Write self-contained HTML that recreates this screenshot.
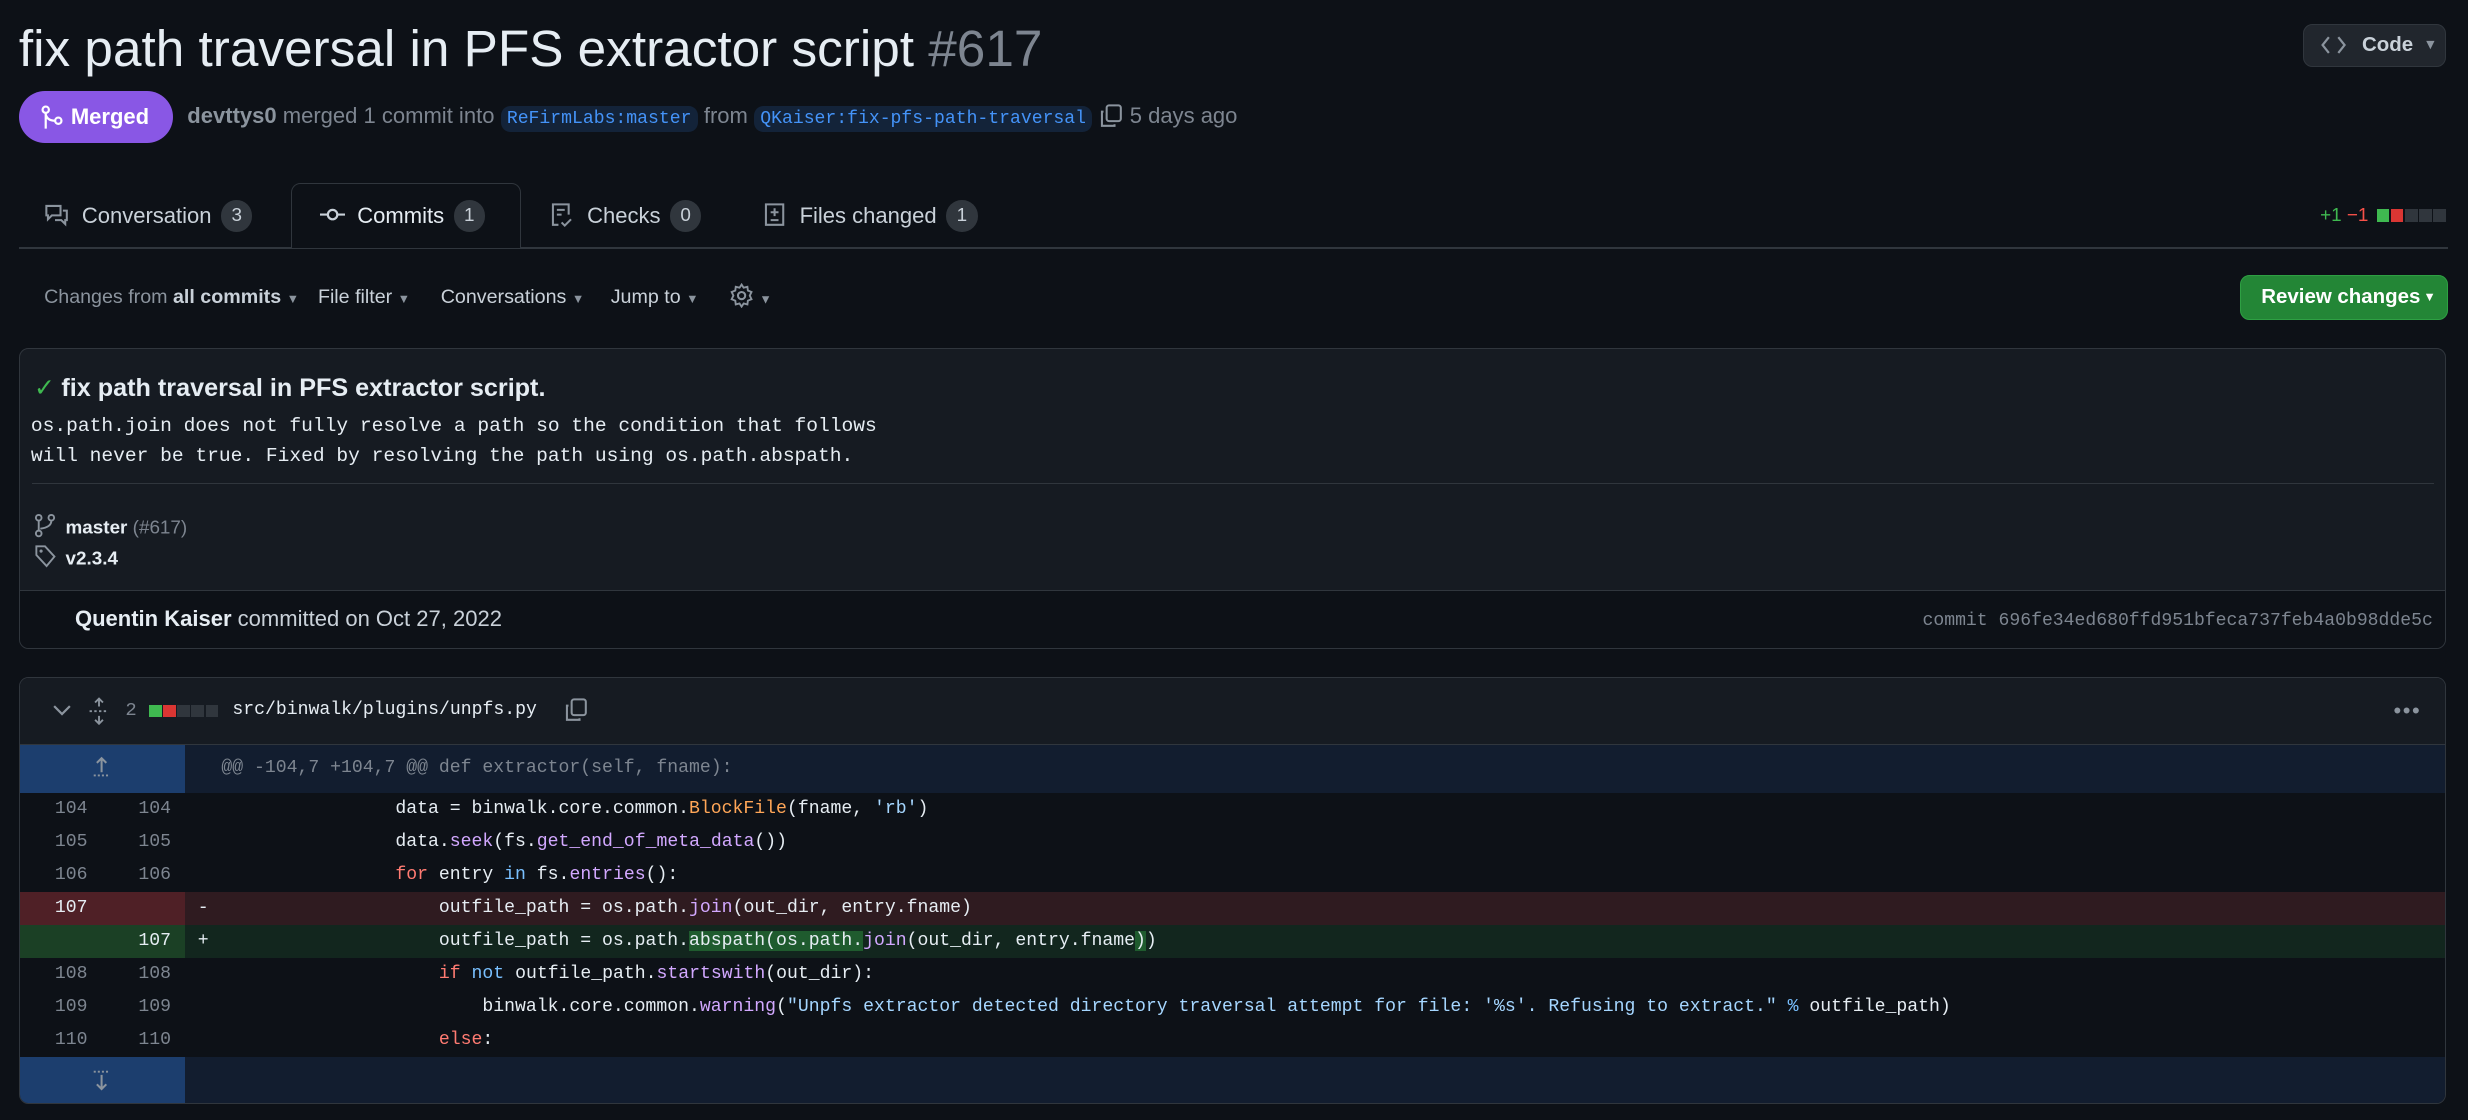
<!DOCTYPE html>
<html><head><meta charset="utf-8">
<style>
html,body{margin:0;padding:0;background:#0d1117;overflow:hidden}
body{width:2468px;height:1120px}
#w{zoom:1.574;position:relative;width:1568px;height:712px;font-family:"Liberation Sans",sans-serif;color:#e6edf3}
.a{position:absolute;white-space:nowrap}
.mono{font-family:"Liberation Mono",monospace}
.muted{color:#7d8590}
.cnt{display:inline-block;min-width:20px;height:20px;line-height:20px;border-radius:10px;background:#30363d;color:#c9d1d9;font-size:12px;text-align:center;margin-left:6px;vertical-align:1px}
.tab{font-size:14px;color:#c9d1d9}
.lbl{background:rgba(56,139,253,.15);color:#4493f8;border-radius:6px;padding:2px 4px;font-size:11.5px}
.tb{font-size:12.5px;color:#8b949e}
.row{position:absolute;left:0;width:1543px;height:21px;font-size:11.52px;line-height:21px}
.n1,.n2{position:absolute;top:0;width:30px;text-align:right;color:#7d8590;font-family:"Liberation Mono",monospace}
.n1{left:13px}.n2{left:66px}
.c{position:absolute;left:128px;white-space:pre;font-family:"Liberation Mono",monospace;color:#e6edf3}
.mk{position:absolute;left:113px;font-family:"Liberation Mono",monospace}
.o{color:#ffa657}.p{color:#d2a8ff}.r{color:#ff7b72}.b{color:#79c0ff}.s{color:#a5d6ff}
.bl{display:flex;gap:1px;height:8px}.bl i{display:block;width:8px;height:8px;background:#30363d}
</style></head><body><div id="w">

<div class="a" style="left:12px;top:9px;font-size:32.6px;line-height:44px">fix path traversal in PFS extractor script <span class="muted" style="font-weight:300">#617</span></div>

<div class="a" style="left:1463px;top:15px;width:90px;height:26px;border:1px solid #30363d;background:#21262d;border-radius:6px;font-size:13px;line-height:26px">
<svg style="position:absolute;left:11px;top:6px" width="16" height="14" viewBox="0 0 16 14"><path d="M5 2 L1 7 L5 12 M11 2 L15 7 L11 12" stroke="#8b949e" stroke-width="1.4" fill="none"/></svg>
<span style="position:absolute;left:37px;color:#c9d1d9;font-weight:bold">Code</span><span style="position:absolute;left:76px;color:#8b949e;font-size:9px">▼</span></div>

<div class="a" style="left:12px;top:58px;width:98px;height:33px;background:#8957e5;border-radius:17px;font-size:14px;line-height:33px;color:#fff;font-weight:bold">
<svg style="position:absolute;left:14px;top:9px" width="14" height="16" viewBox="0 0 14 16"><circle cx="3" cy="3" r="2" stroke="#fff" fill="none" stroke-width="1.4"/><circle cx="11" cy="10" r="2" stroke="#fff" fill="none" stroke-width="1.4"/><path d="M3 5 V15 M3 6 Q4 10 9 10" stroke="#fff" fill="none" stroke-width="1.4"/></svg>
<span style="position:absolute;left:33px">Merged</span></div>

<div class="a muted" style="left:119px;top:65px;font-size:14px;line-height:18px"><b style="color:#8b949e">devttys0</b> merged 1 commit into <span class="lbl mono">ReFirmLabs:master</span> from <span class="lbl mono">QKaiser:fix-pfs-path-traversal</span> <svg width="16" height="16" viewBox="0 0 16 16" style="vertical-align:-3px"><rect x="5.5" y="1.5" width="9" height="10" rx="1.5" stroke="#8b949e" fill="none" stroke-width="1.3"/><path d="M3.5 5.5 H2.5 V14.5 H10.5 V13.5" stroke="#8b949e" fill="none" stroke-width="1.3"/></svg> 5 days ago</div>

<!-- tabs -->
<div class="a" style="left:12px;top:157px;width:1543px;height:1px;background:#30363d"></div>
<div class="a" style="left:185px;top:116px;width:145px;height:41px;border:1px solid #30363d;border-bottom:none;border-radius:6px 6px 0 0;background:#0d1117"></div>
<div class="a tab" style="left:28px;top:127px;line-height:20px"><svg width="16" height="16" viewBox="0 0 16 16" style="vertical-align:-3px;margin-right:8px"><path d="M1.5 2.5 H10.5 V8.5 H5 L2.5 11 V8.5 H1.5 Z M12 5.5 H14.5 V11.5 H13.5 V14 L11 11.5 H7" stroke="#8b949e" fill="none" stroke-width="1.3"/></svg>Conversation<span class="cnt">3</span></div>
<div class="a tab" style="left:203px;top:127px;line-height:20px;color:#e6edf3"><svg width="16" height="16" viewBox="0 0 16 16" style="vertical-align:-3px;margin-right:8px"><circle cx="8" cy="8" r="3" stroke="#c9d1d9" fill="none" stroke-width="1.4"/><path d="M0 8 H5 M11 8 H16" stroke="#c9d1d9" stroke-width="1.4"/></svg>Commits<span class="cnt">1</span></div>
<div class="a tab" style="left:349px;top:127px;line-height:20px"><svg width="16" height="16" viewBox="0 0 16 16" style="vertical-align:-3px;margin-right:8px"><path d="M6 14.5 H2.5 V1.5 H12.5 V8 M5 5 H10 M5 8 H8 M8 13 L10 15 L14 11" stroke="#8b949e" fill="none" stroke-width="1.3"/></svg>Checks<span class="cnt">0</span></div>
<div class="a tab" style="left:484px;top:127px;line-height:20px"><svg width="16" height="16" viewBox="0 0 16 16" style="vertical-align:-3px;margin-right:8px"><path d="M2.5 1.5 H13.5 V14.5 H2.5 Z M8 4 V9 M5.5 6.5 H10.5 M5.5 11.5 H10.5" stroke="#8b949e" fill="none" stroke-width="1.3"/></svg>Files changed<span class="cnt">1</span></div>
<div class="a" style="left:1474px;top:130px;font-size:12px;line-height:14px"><span style="color:#3fb950">+1</span> <span style="color:#f85149">−1</span></div>
<div class="a bl" style="left:1510px;top:133px"><i style="background:#3fb950"></i><i style="background:#da3633"></i><i></i><i></i><i></i></div>

<!-- toolbar -->
<div class="a tb" style="left:28px;top:181px;line-height:16px">Changes from <b style="color:#c9d1d9">all commits</b> <span style="font-size:8px">▼</span></div>
<div class="a tb" style="left:202px;top:181px;line-height:16px;color:#c9d1d9">File filter <span style="font-size:8px;color:#8b949e">▼</span></div>
<div class="a tb" style="left:280px;top:181px;line-height:16px;color:#c9d1d9">Conversations <span style="font-size:8px;color:#8b949e">▼</span></div>
<div class="a tb" style="left:388px;top:181px;line-height:16px;color:#c9d1d9">Jump to <span style="font-size:8px;color:#8b949e">▼</span></div>
<div class="a tb" style="left:463px;top:180px;line-height:16px"><svg width="16" height="16" viewBox="0 0 16 16" style="vertical-align:-3px"><circle cx="8" cy="8" r="2.3" stroke="#8b949e" fill="none" stroke-width="1.3"/><path d="M8 1 L9.3 3 L11.7 2.4 L12 4.8 L14.3 5.7 L13.2 8 L14.3 10.3 L12 11.2 L11.7 13.6 L9.3 13 L8 15 L6.7 13 L4.3 13.6 L4 11.2 L1.7 10.3 L2.8 8 L1.7 5.7 L4 4.8 L4.3 2.4 L6.7 3 Z" stroke="#8b949e" fill="none" stroke-width="1.2"/></svg> <span style="font-size:8px">▼</span></div>
<div class="a" style="left:1423px;top:175px;width:131px;height:27px;background:#238636;border:1px solid #2ea043;border-radius:6px;font-size:13px;line-height:27px;color:#fff;font-weight:bold"><span style="position:absolute;left:13px">Review changes</span><span style="position:absolute;left:116px;font-size:8px">▼</span></div>

<!-- commit box -->
<div class="a" style="left:12px;top:221px;width:1541px;height:190px;border:1px solid #30363d;border-radius:6px;background:#161b22;overflow:hidden">
 <div class="a" style="left:9px;top:14px;font-size:16px;line-height:22px;font-weight:bold"><span style="color:#3fb950;font-weight:normal;margin-right:4px">✓</span>fix path traversal in PFS extractor script.</div>
 <div class="a mono" style="left:7px;top:40px;font-size:12.45px;line-height:19px;color:#e6edf3">os.path.join does not fully resolve a path so the condition that follows<br>will never be true. Fixed by resolving the path using os.path.abspath.</div>
 <div class="a" style="left:8px;top:85px;width:1526px;height:1px;background:#30363d"></div>
 <div class="a" style="left:9px;top:104px;font-size:12px;line-height:18px;font-weight:bold"><svg width="14" height="16" viewBox="0 0 14 16" style="vertical-align:-3px;margin-right:6px"><circle cx="3" cy="3" r="1.8" stroke="#8b949e" fill="none" stroke-width="1.2"/><circle cx="11" cy="3" r="1.8" stroke="#8b949e" fill="none" stroke-width="1.2"/><circle cx="3" cy="13" r="1.8" stroke="#8b949e" fill="none" stroke-width="1.2"/><path d="M3 5 V11 M11 5 Q11 9 4 10" stroke="#8b949e" fill="none" stroke-width="1.2"/></svg>master <span class="muted" style="font-weight:normal">(#617)</span></div>
 <div class="a" style="left:9px;top:124px;font-size:12px;line-height:18px;font-weight:bold"><svg width="14" height="16" viewBox="0 0 14 16" style="vertical-align:-3px;margin-right:6px"><path d="M1.5 1.5 H7 L13 8 L8 14 L1.5 7 Z" stroke="#8b949e" fill="none" stroke-width="1.2"/><circle cx="4.5" cy="4.5" r="1" fill="#8b949e"/></svg>v2.3.4</div>
 <div class="a" style="left:0;top:153px;width:1541px;height:37px;background:#0d1117;border-top:1px solid #30363d"></div>
 <div class="a" style="left:35px;top:163px;font-size:14px;line-height:18px;color:#c9d1d9"><b style="color:#e6edf3">Quentin Kaiser</b> committed on Oct 27, 2022</div>
 <div class="a mono muted" style="right:8px;top:165px;font-size:11.5px;line-height:16px">commit 696fe34ed680ffd951bfeca737feb4a0b98dde5c</div>
</div>

<!-- file box -->
<div class="a" style="left:12px;top:430px;width:1541px;height:270px;border:1px solid #30363d;border-radius:6px;background:#0d1117;overflow:hidden">
 <div class="a" style="left:0;top:0;width:1541px;height:42px;background:#161b22;border-bottom:1px solid #30363d"></div>
 <svg class="a" style="left:20px;top:16px" width="14" height="10" viewBox="0 0 14 10"><path d="M2 2 L7 7 L12 2" stroke="#8b949e" fill="none" stroke-width="1.4"/></svg>
 <svg class="a" style="left:43px;top:12px" width="14" height="18" viewBox="0 0 14 18"><path d="M7 1 V6 M4.5 3.5 L7 1 L9.5 3.5 M7 12 V17 M4.5 14.5 L7 17 L9.5 14.5" stroke="#8b949e" fill="none" stroke-width="1.2"/><path d="M1 9 H13" stroke="#8b949e" stroke-dasharray="1.5 1.5" stroke-width="1.2"/></svg>
 <div class="a mono muted" style="left:67px;top:13px;font-size:12px;line-height:16px">2</div>
 <div class="a bl" style="left:82px;top:17px"><i style="background:#3fb950"></i><i style="background:#da3633"></i><i></i><i></i><i></i></div>
 <div class="a mono" style="left:135px;top:13px;font-size:11.52px;line-height:16px">src/binwalk/plugins/unpfs.py</div>
 <svg class="a" style="left:345px;top:12px" width="16" height="16" viewBox="0 0 16 16"><rect x="5.5" y="1.5" width="9" height="10" rx="1.5" stroke="#8b949e" fill="none" stroke-width="1.3"/><path d="M3.5 5.5 H2.5 V14.5 H10.5 V13.5" stroke="#8b949e" fill="none" stroke-width="1.3"/></svg>
 <div class="a" style="left:1508px;top:13px;color:#8b949e;font-size:14px;letter-spacing:1px">•••</div>

 <!-- hunk -->
 <div class="a" style="left:0;top:43px;width:105px;height:30px;background:#1c3e6e"></div>
 <div class="a" style="left:105px;top:43px;width:1436px;height:30px;background:#121d2f"></div>
 <svg class="a" style="left:44px;top:49px" width="16" height="16" viewBox="0 0 16 16"><path d="M8 2 V11 M5 5 L8 2 L11 5" stroke="#8b949e" fill="none" stroke-width="1.3"/><path d="M3 13 H13" stroke="#8b949e" stroke-dasharray="1.3 1.3" stroke-width="1.2"/></svg>
 <div class="a mono muted" style="left:128px;top:43px;font-size:11.52px;line-height:30px">@@ -104,7 +104,7 @@ def extractor(self, fname):</div>

 <div class="row" style="top:73px"><span class="n1">104</span><span class="n2">104</span><span class="c">                data = binwalk.core.common.<span class="o">BlockFile</span>(fname, <span class="s">'rb'</span>)</span></div>
 <div class="row" style="top:94px"><span class="n1">105</span><span class="n2">105</span><span class="c">                data.<span class="p">seek</span>(fs.<span class="p">get_end_of_meta_data</span>())</span></div>
 <div class="row" style="top:115px"><span class="n1">106</span><span class="n2">106</span><span class="c">                <span class="r">for</span> entry <span class="b">in</span> fs.<span class="p">entries</span>():</span></div>
 <div class="row" style="top:136px;background:#2f1b20"><span style="position:absolute;left:0;top:0;width:105px;height:21px;background:#4f2026"></span><span class="n1" style="color:#e6edf3">107</span><span class="mk">-</span><span class="c">                    outfile_path = os.path.<span class="p">join</span>(out_dir, entry.fname)</span></div>
 <div class="row" style="top:157px;background:#12261e"><span style="position:absolute;left:0;top:0;width:105px;height:21px;background:#1b4025"></span><span class="n2" style="color:#e6edf3">107</span><span class="mk">+</span><span class="c">                    outfile_path = os.path.<span style="background:#1f5b2e">abspath(os.path.</span><span class="p">join</span>(out_dir, entry.fname<span style="background:#1f5b2e">)</span>)</span></div>
 <div class="row" style="top:178px"><span class="n1">108</span><span class="n2">108</span><span class="c">                    <span class="r">if</span> <span class="b">not</span> outfile_path.<span class="p">startswith</span>(out_dir):</span></div>
 <div class="row" style="top:199px"><span class="n1">109</span><span class="n2">109</span><span class="c">                        binwalk.core.common.<span class="p">warning</span>(<span class="s">"Unpfs extractor detected directory traversal attempt for file: '%s'. Refusing to extract."</span> <span class="b">%</span> outfile_path)</span></div>
 <div class="row" style="top:220px"><span class="n1">110</span><span class="n2">110</span><span class="c">                    <span class="r">else</span>:</span></div>
 <div class="a" style="left:0;top:241px;width:105px;height:29px;background:#1c3e6e"></div>
 <div class="a" style="left:105px;top:241px;width:1436px;height:29px;background:#121d2f"></div>
 <svg class="a" style="left:44px;top:247px" width="16" height="16" viewBox="0 0 16 16"><path d="M3 3 H13" stroke="#8b949e" stroke-dasharray="1.3 1.3" stroke-width="1.2"/><path d="M8 5 V14 M5 11 L8 14 L11 11" stroke="#8b949e" fill="none" stroke-width="1.3"/></svg>
</div>

</div></body></html>
